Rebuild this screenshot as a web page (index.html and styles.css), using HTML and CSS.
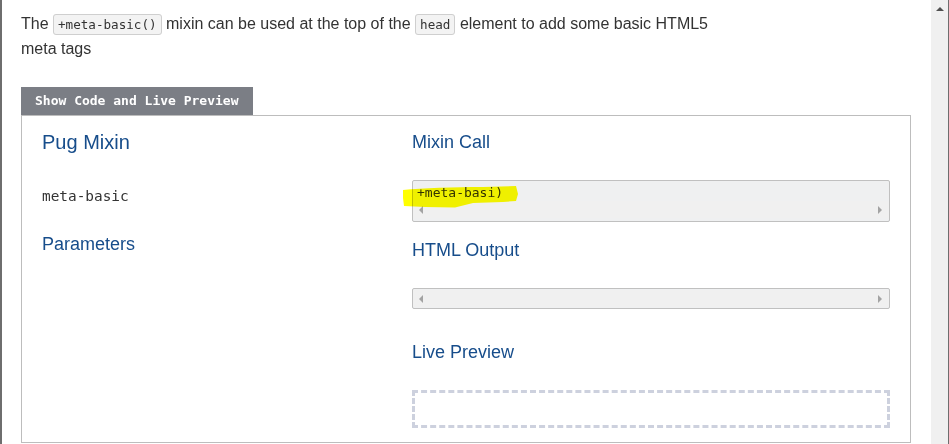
FILE: index.html
```html
<!DOCTYPE html>
<html>
<head>
<meta charset="utf-8">
<link rel="stylesheet" href="styles.css">
</head>
<body>
<div class="window">
  <main class="page">
    <p class="intro">The <code class="inline">+meta-basic()</code> mixin can be used at the top of the <code class="inline">head</code> element to add some basic HTML5<br>meta tags</p>
    <div class="tab">Show Code and Live Preview</div>
    <section class="panel">
      <div class="col-left">
        <h2 class="title title-main">Pug Mixin</h2>
        <div class="mixin-name">meta-basic</div>
        <h3 class="title">Parameters</h3>
      </div>
      <div class="col-right">
        <h3 class="title">Mixin Call</h3>
        <div class="codebox codebox-call">
          <div class="code-line">+meta-basi)</div>
          <svg class="marker" width="120" height="30" viewBox="-12 0 120 30"><path d="M-10,9 C10,7 40,6 70,6 L103,5 L105,13 L103,20 L90,21 L60,22 L42,26.5 L12,26 L-9,25 L-10,17 Z" fill="#ffff00"/></svg>
          <div class="hscroll"><span class="arr-l"></span><span class="arr-r"></span></div>
        </div>
        <h3 class="title">HTML Output</h3>
        <div class="codebox codebox-out">
          <div class="hscroll"><span class="arr-l"></span><span class="arr-r"></span></div>
        </div>
        <h3 class="title">Live Preview</h3>
        <div class="preview"></div>
      </div>
    </section>
  </main>
  <div class="vscroll"><span class="arr-up"></span></div>
</div>
</body>
</html>
```
FILE: styles.css
```css
html, body {
  margin: 0;
  padding: 0;
  height: 100%;
  background: #fff;
}
body {
  font-family: "Liberation Sans", Arial, sans-serif;
  color: #333;
  overflow: hidden;
}
.window {
  display: flex;
  height: 444px;
  border-left: 2px solid #6e6e6e;
  border-right: 1px solid #6e6e6e;
  box-sizing: border-box;
}
.page {
  flex: 1;
  padding: 12px 20px 0 19px;
  min-width: 0;
}
.vscroll {
  width: 17px;
  background: #f0f0f0;
  display: flex;
  justify-content: center;
  padding-top: 7px;
  box-sizing: border-box;
}
.arr-up {
  width: 0;
  height: 0;
  border-left: 4px solid transparent;
  border-right: 4px solid transparent;
  border-bottom: 4px solid #505050;
}
.intro {
  margin: 0;
  font-size: 16px;
  line-height: 24px;
}
.inline {
  font-family: "DejaVu Sans Mono", "Liberation Mono", monospace;
  font-size: 12.6px;
  background: #f3f3f3;
  border: 1px solid #cfcfcf;
  border-radius: 3px;
  padding: 2px 4px;
  color: #333;
}
.tab {
  display: inline-block;
  margin-top: 26px;
  height: 28px;
  line-height: 28px;
  padding: 0 14px;
  background: #7b7e85;
  color: #fff;
  font-family: "DejaVu Sans Mono", "Liberation Mono", monospace;
  font-weight: bold;
  font-size: 13px;
  vertical-align: top;
}
.panel {
  border: 1px solid #bdbdbd;
  display: grid;
  grid-template-columns: 370px 1fr;
  padding: 14px 20px 14px 20px;
  height: 328px;
  box-sizing: border-box;
}
.title {
  margin: 0;
  font-size: 18px;
  line-height: 24px;
  font-weight: normal;
  color: #174d8b;
}
.title-main {
  font-size: 20px;
}
.col-left .title-main {
  margin-bottom: 32px;
}
.mixin-name {
  font-family: "DejaVu Sans Mono", "Liberation Mono", monospace;
  font-size: 14.4px;
  line-height: 20px;
  color: #333;
  margin-bottom: 26px;
}
.col-right .title {
  margin-bottom: 26px;
}
.codebox {
  position: relative;
  background: #eff0f1;
  border: 1px solid #c0c0c0;
  border-radius: 2px;
  box-sizing: border-box;
}
.codebox-call {
  height: 42px;
  margin-bottom: 16px;
  padding-top: 3px;
}
.codebox-out {
  height: 21px;
  margin-bottom: 31px;
  padding-top: 1px;
}
.code-line {
  position: relative;
  z-index: 1;
  font-family: "DejaVu Sans Mono", "Liberation Mono", monospace;
  font-size: 13px;
  line-height: 17px;
  padding-left: 4px;
  color: #333;
}
.marker {
  position: absolute;
  left: -12px;
  top: 0;
  z-index: 2;
  mix-blend-mode: multiply;
  overflow: visible;
}
.hscroll {
  height: 17px;
  display: flex;
  justify-content: space-between;
  align-items: center;
  padding: 0 7px 0 6px;
  background: #f0f0f0;
}
.arr-l {
  width: 0;
  height: 0;
  border-top: 4px solid transparent;
  border-bottom: 4px solid transparent;
  border-right: 4px solid #a3a3a3;
}
.arr-r {
  width: 0;
  height: 0;
  border-top: 4px solid transparent;
  border-bottom: 4px solid transparent;
  border-left: 4px solid #a3a3a3;
}
.preview {
  height: 38px;
  border: 3px dashed #cdd1de;
  box-sizing: border-box;
}
```
